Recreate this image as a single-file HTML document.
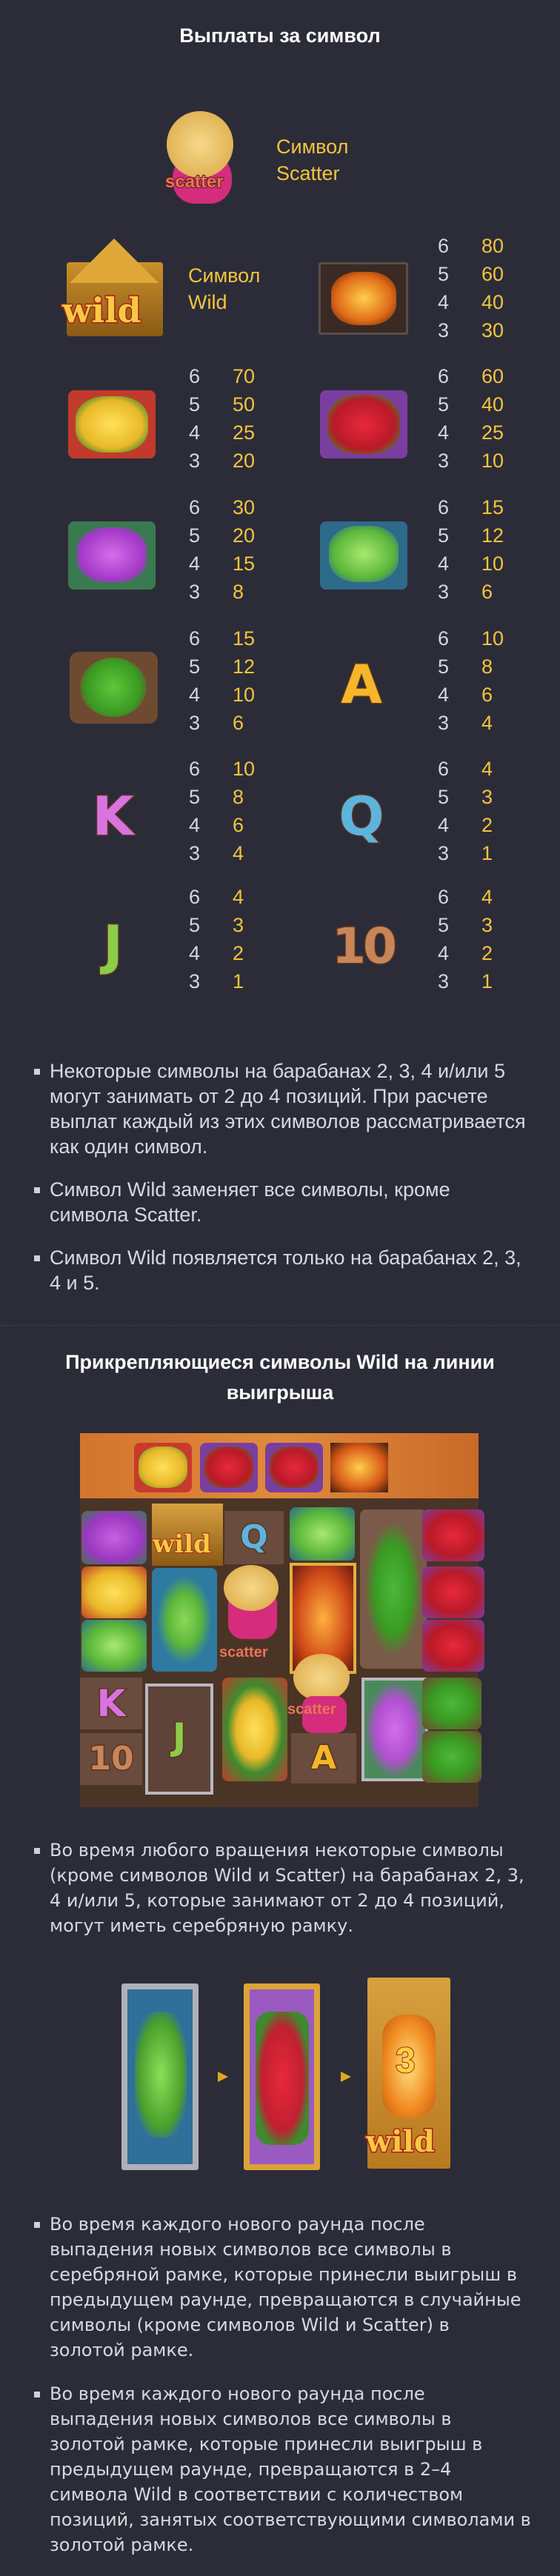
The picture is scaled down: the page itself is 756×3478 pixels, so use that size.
<!DOCTYPE html>
<html><head><meta charset="utf-8">
<style>
*{margin:0;padding:0;box-sizing:border-box}
body{width:756px;height:3462px;background:#2c2c39;position:relative;overflow:hidden;font-family:"Liberation Sans",sans-serif}
.a{position:absolute}
.h{color:#fff;font-weight:bold;font-size:27px;text-align:center;width:756px;left:0}
.nums{position:absolute;font-size:27px;line-height:38px;color:#d6d6dc}
.vals{position:absolute;font-size:27px;line-height:38px;color:#f3c53c}
.lbl{position:absolute;font-size:27px;line-height:36px;color:#f3c53c}
ul{list-style:none}
.t1 li{position:relative;padding-left:21px;color:#d8d8de;font-size:27px;line-height:34px;margin-bottom:24px}
.t1 li:before{content:"";position:absolute;left:0;top:14px;width:8px;height:8px;background:#d0d0d6}
.t2 li{position:relative;padding-left:21px;color:#d8d8de;font-family:"DejaVu Sans",sans-serif;font-size:24px;line-height:34px;margin-bottom:25px;white-space:nowrap}
.t2 li:before{content:"";position:absolute;left:0;top:14px;width:8px;height:8px;background:#d0d0d6}
.tile{position:absolute;border-radius:8px}
.letter{position:absolute;font-weight:bold;font-family:"DejaVu Sans",sans-serif;-webkit-text-stroke:3px #5a3320;paint-order:stroke fill;text-align:center}
</style></head><body>

<div class="a h" style="top:33px">Выплаты за символ</div>

<div class="a" style="left:215px;top:150px;width:118px;height:127px">
  <div class="a" style="left:18px;top:55px;width:80px;height:70px;background:#d62c7c;border-radius:35px 35px 30px 30px"></div>
  <div class="a" style="left:10px;top:0;width:90px;height:90px;border-radius:50%;background:radial-gradient(circle,#f6d98a,#d9a441);"></div>
  <div class="a" style="left:8px;top:82px;font-size:24px;font-weight:bold;color:#e8745a;-webkit-text-stroke:2px #5a1d12;paint-order:stroke fill">scatter</div>
</div>
<div class="lbl" style="left:373px;top:180px">Символ<br>Scatter</div>

<div class="a" style="left:82px;top:322px;width:144px;height:135px">
  <div class="a" style="left:8px;top:32px;width:130px;height:100px;background:linear-gradient(#c9902a,#8a5a14);border-radius:4px"></div>
  <div class="a" style="left:12px;top:0;width:0;height:0;border-left:60px solid transparent;border-right:60px solid transparent;border-bottom:60px solid #e0a838"></div>
  <div class="a" style="left:2px;top:70px;font-size:46px;font-weight:bold;color:#f8c843;-webkit-text-stroke:3px #a8241a;paint-order:stroke fill;font-family:'DejaVu Serif',serif">wild</div>
</div>
<div class="lbl" style="left:254px;top:354px">Символ<br>Wild</div>

<div class="tile" style="left:430px;top:354px;width:121px;height:98px;background:#3a2a24;border:3px solid #5a4e48;border-radius:3px">
  <div class="a" style="left:14px;top:10px;width:88px;height:72px;background:radial-gradient(ellipse,#ffcf4a,#e06a18 60%,#5a1a0a);border-radius:40%"></div>
</div>
<div class="nums" style="left:591px;top:313px">6<br>5<br>4<br>3</div>
<div class="vals" style="left:650px;top:313px">80<br>60<br>40<br>30</div>

<div class="tile" style="left:92px;top:527px;width:118px;height:92px;background:#c23a2c">
  <div class="a" style="left:10px;top:8px;width:98px;height:76px;background:radial-gradient(ellipse,#ffe15a,#e8b828 60%,#3f8a30 85%);border-radius:40%"></div>
</div>
<div class="nums" style="left:255px;top:489px">6<br>5<br>4<br>3</div>
<div class="vals" style="left:314px;top:489px">70<br>50<br>25<br>20</div>
<div class="tile" style="left:432px;top:527px;width:118px;height:92px;background:#7a3ea0">
  <div class="a" style="left:10px;top:6px;width:98px;height:80px;background:radial-gradient(ellipse,#e8283a,#b81a28 60%,#3f8a30 88%);border-radius:40%"></div>
</div>
<div class="nums" style="left:591px;top:489px">6<br>5<br>4<br>3</div>
<div class="vals" style="left:650px;top:489px">60<br>40<br>25<br>10</div>

<div class="tile" style="left:92px;top:704px;width:118px;height:92px;background:#3a7a50">
  <div class="a" style="left:12px;top:8px;width:94px;height:74px;background:radial-gradient(ellipse,#d46ee8,#a438c8 65%,#3a7a50 90%);border-radius:40%"></div>
</div>
<div class="nums" style="left:255px;top:666px">6<br>5<br>4<br>3</div>
<div class="vals" style="left:314px;top:666px">30<br>20<br>15<br>8</div>
<div class="tile" style="left:432px;top:704px;width:118px;height:92px;background:#2e6a8a">
  <div class="a" style="left:12px;top:6px;width:94px;height:76px;background:radial-gradient(ellipse,#a8e870,#5cb83a 60%,#2e6a8a 90%);border-radius:40%"></div>
</div>
<div class="nums" style="left:591px;top:666px">6<br>5<br>4<br>3</div>
<div class="vals" style="left:650px;top:666px">15<br>12<br>10<br>6</div>

<div class="tile" style="left:94px;top:880px;width:119px;height:97px;background:#6e4a30;border-radius:12px">
  <div class="a" style="left:14px;top:8px;width:90px;height:80px;background:radial-gradient(circle,#5cc83a,#3a9a22 60%,#6e4a30 85%);border-radius:50%"></div>
</div>
<div class="nums" style="left:255px;top:843px">6<br>5<br>4<br>3</div>
<div class="vals" style="left:314px;top:843px">15<br>12<br>10<br>6</div>
<div class="letter" style="left:448px;top:884px;width:80px;font-size:72px;line-height:80px;color:#f5b62a">A</div>
<div class="nums" style="left:591px;top:843px">6<br>5<br>4<br>3</div>
<div class="vals" style="left:650px;top:843px">10<br>8<br>6<br>4</div>

<div class="letter" style="left:115px;top:1062px;width:75px;font-size:72px;line-height:80px;color:#d873e0">K</div>
<div class="nums" style="left:255px;top:1019px">6<br>5<br>4<br>3</div>
<div class="vals" style="left:314px;top:1019px">10<br>8<br>6<br>4</div>
<div class="letter" style="left:448px;top:1062px;width:80px;font-size:72px;line-height:80px;color:#5cb4dc">Q</div>
<div class="nums" style="left:591px;top:1019px">6<br>5<br>4<br>3</div>
<div class="vals" style="left:650px;top:1019px">4<br>3<br>2<br>1</div>

<div class="letter" style="left:115px;top:1236px;width:75px;font-size:72px;line-height:80px;color:#8ccc4a">J</div>
<div class="nums" style="left:255px;top:1192px">6<br>5<br>4<br>3</div>
<div class="vals" style="left:314px;top:1192px">4<br>3<br>2<br>1</div>
<div class="letter" style="left:440px;top:1238px;width:100px;font-size:66px;line-height:80px;color:#c8855a;letter-spacing:-4px">10</div>
<div class="nums" style="left:591px;top:1192px">6<br>5<br>4<br>3</div>
<div class="vals" style="left:650px;top:1192px">4<br>3<br>2<br>1</div>

<ul class="t1 a" style="left:46px;top:1429px;width:672px">
<li>Некоторые символы на барабанах 2, 3, 4 и/или 5 могут занимать от 2 до 4 позиций. При расчете выплат каждый из этих символов рассматривается как один символ.</li>
<li>Символ Wild заменяет все символы, кроме символа Scatter.</li>
<li>Символ Wild появляется только на барабанах 2, 3, 4 и 5.</li>
</ul>
<div class="a" style="left:0;top:1789px;width:756px;border-top:1px dotted #45455a"></div>

<div class="a h" style="top:1819px;line-height:41px">Прикрепляющиеся символы Wild на линии<br>выигрыша</div>

<div class="a" style="left:108px;top:1935px;width:538px;height:505px;background:#4a3426">
  <div class="a" style="left:0;top:0;width:538px;height:88px;background:linear-gradient(90deg,#d2752e,#e08a3c,#c86a28)"></div>
  <div class="tile" style="left:73px;top:13px;width:78px;height:67px;background:#c83a2c"><div class="a" style="left:6px;top:5px;width:66px;height:56px;border-radius:40%;background:radial-gradient(#ffe15a,#e8b828 60%,#3f8a30)"></div></div>
  <div class="tile" style="left:162px;top:13px;width:78px;height:67px;background:#7a3ea0"><div class="a" style="left:6px;top:5px;width:66px;height:56px;border-radius:40%;background:radial-gradient(#e8283a,#b81a28 60%,#3f8a30)"></div></div>
  <div class="tile" style="left:250px;top:13px;width:78px;height:67px;background:#7a3ea0"><div class="a" style="left:6px;top:5px;width:66px;height:56px;border-radius:40%;background:radial-gradient(#e8283a,#b81a28 60%,#3f8a30)"></div></div>
  <div class="a" style="left:338px;top:13px;width:78px;height:67px;background:radial-gradient(#ffcf4a,#d85a18 60%,#3a1a10)"></div>
  <div class="tile" style="left:2px;top:105px;width:88px;height:72px;background:radial-gradient(#c860e0,#9a38c0 60%,#3a7a50)"></div>
  <div class="tile" style="left:2px;top:180px;width:88px;height:70px;background:radial-gradient(#ffe15a,#e8b828 55%,#c23a2c)"></div>
  <div class="tile" style="left:2px;top:252px;width:88px;height:70px;background:radial-gradient(#a8e870,#5cb83a 55%,#2e6a8a)"></div>
  <div class="a" style="left:0;top:330px;width:84px;height:70px;background:#6a4c3e"></div>
  <div class="letter" style="left:0;top:330px;width:84px;font-size:50px;line-height:70px;color:#d873e0">K</div>
  <div class="a" style="left:0;top:405px;width:84px;height:70px;background:#6a4c3e"></div>
  <div class="letter" style="left:0;top:405px;width:84px;font-size:44px;line-height:70px;color:#c8855a">10</div>
  <div class="a" style="left:97px;top:95px;width:96px;height:84px;background:linear-gradient(#d8a040,#8a5a14)"></div>
  <div class="a" style="left:98px;top:130px;font-size:34px;font-weight:bold;color:#f8c843;-webkit-text-stroke:2px #a8241a;paint-order:stroke fill;font-family:'DejaVu Serif',serif">wild</div>
  <div class="tile" style="left:97px;top:182px;width:88px;height:140px;background:radial-gradient(#8cd85a,#5cb83a 35%,#2e7aa0 60%)"></div>
  <div class="a" style="left:88px;top:338px;width:92px;height:150px;background:#5e4438;border:4px solid #b8b8c0"></div>
  <div class="letter" style="left:88px;top:370px;width:92px;font-size:50px;line-height:80px;color:#8ccc4a">J</div>
  <div class="a" style="left:195px;top:105px;width:80px;height:72px;background:#6a4c3e"></div>
  <div class="letter" style="left:195px;top:105px;width:80px;font-size:44px;line-height:72px;color:#5cb4dc">Q</div>
  <div class="a" style="left:200px;top:210px;width:66px;height:68px;background:#d62c7c;border-radius:20px"></div>
  <div class="a" style="left:194px;top:178px;width:74px;height:62px;border-radius:50%;background:radial-gradient(#f6d98a,#d9a441)"></div>
  <div class="a" style="left:188px;top:285px;font-size:20px;font-weight:bold;color:#e8745a">scatter</div>
  <div class="tile" style="left:192px;top:330px;width:88px;height:140px;background:radial-gradient(#ffe15a,#e8b828 40%,#3f8a30 60%,#c23a2c)"></div>
  <div class="tile" style="left:283px;top:100px;width:88px;height:72px;background:radial-gradient(#a8e870,#5cb83a 55%,#2e6a8a)"></div>
  <div class="a" style="left:283px;top:175px;width:90px;height:150px;background:radial-gradient(#ffb040,#d04a18 60%,#6a1a10);border:4px solid #e0b040"></div>
  <div class="a" style="left:288px;top:298px;width:76px;height:64px;border-radius:50%;background:radial-gradient(#f6d98a,#d9a441)"></div>
  <div class="a" style="left:300px;top:355px;width:60px;height:50px;background:#d62c7c;border-radius:14px"></div>
  <div class="a" style="left:280px;top:362px;font-size:20px;font-weight:bold;color:#e8745a">scatter</div>
  <div class="a" style="left:285px;top:405px;width:88px;height:68px;background:#6a4c3e"></div>
  <div class="letter" style="left:285px;top:405px;width:88px;font-size:44px;line-height:68px;color:#f5b62a">A</div>
  <div class="tile" style="left:378px;top:103px;width:90px;height:215px;background:radial-gradient(ellipse,#4cb83a,#3a9a22 40%,#7a5a48 60%)"></div>
  <div class="a" style="left:380px;top:330px;width:90px;height:140px;background:radial-gradient(#d46ee8,#b050d0 45%,#4a8a5a 70%);border:4px solid #b8b8c0"></div>
  <div class="tile" style="left:462px;top:103px;width:84px;height:70px;background:radial-gradient(#e8283a,#b81a28 55%,#7a3ea0)"></div>
  <div class="tile" style="left:462px;top:180px;width:84px;height:70px;background:radial-gradient(#e8283a,#b81a28 55%,#7a3ea0)"></div>
  <div class="tile" style="left:462px;top:252px;width:84px;height:70px;background:radial-gradient(#e8283a,#b81a28 55%,#7a3ea0)"></div>
  <div class="tile" style="left:462px;top:330px;width:80px;height:70px;background:radial-gradient(#4cb83a,#3a9a22 50%,#6e4a30)"></div>
  <div class="tile" style="left:462px;top:402px;width:80px;height:70px;background:radial-gradient(#4cb83a,#3a9a22 50%,#6e4a30)"></div>
</div>

<ul class="t2 a" style="left:46px;top:2481px;width:700px">
<li>Во время любого вращения некоторые символы<br>(кроме символов Wild и Scatter) на барабанах 2, 3,<br>4 и/или 5, которые занимают от 2 до 4 позиций,<br>могут иметь серебряную рамку.</li>
</ul>

<div class="a" style="left:164px;top:2678px;width:104px;height:252px;background:#2f6f9a;border:8px solid #b0b0b8;border-radius:3px">
  <div class="a" style="left:10px;top:30px;width:70px;height:170px;border-radius:30px;background:radial-gradient(ellipse,#8ce05a,#4aa02a 60%,#2f6f9a 80%)"></div>
</div>
<div class="a" style="left:294px;top:2797px;width:0;height:0;border-top:7px solid transparent;border-bottom:7px solid transparent;border-left:14px solid #e0a820"></div>
<div class="a" style="left:329px;top:2678px;width:103px;height:252px;background:#9a5ac0;border:8px solid #dca436;border-radius:3px">
  <div class="a" style="left:8px;top:30px;width:72px;height:180px;border-radius:20px;background:radial-gradient(ellipse,#e8283a,#c02030 55%,#3f8a30 75%)"></div>
</div>
<div class="a" style="left:460px;top:2797px;width:0;height:0;border-top:7px solid transparent;border-bottom:7px solid transparent;border-left:14px solid #e0a820"></div>
<div class="a" style="left:496px;top:2670px;width:112px;height:258px;background:linear-gradient(#d8a040,#b87a20);border-radius:3px">
  <div class="a" style="left:20px;top:50px;width:72px;height:140px;border-radius:30px;background:radial-gradient(ellipse,#ffe080,#f08a20 60%,#c05a10)"></div>
  <div class="a" style="left:38px;top:85px;font-size:48px;font-weight:bold;color:#ffd040;-webkit-text-stroke:2px #a03010;paint-order:stroke fill">3</div>
  <div class="a" style="left:-2px;top:198px;font-size:40px;font-weight:bold;color:#f8c843;-webkit-text-stroke:3px #a8241a;paint-order:stroke fill;font-family:'DejaVu Serif',serif">wild</div>
</div>

<ul class="t2 a" style="left:46px;top:2986px;width:700px">
<li>Во время каждого нового раунда после<br>выпадения новых символов все символы в<br>серебряной рамке, которые принесли выигрыш в<br>предыдущем раунде, превращаются в случайные<br>символы (кроме символов Wild и Scatter) в<br>золотой рамке.</li>
<li>Во время каждого нового раунда после<br>выпадения новых символов все символы в<br>золотой рамке, которые принесли выигрыш в<br>предыдущем раунде, превращаются в 2–4<br>символа Wild в соответствии с количеством<br>позиций, занятых соответствующими символами в<br>золотой рамке.</li>
</ul>
</body></html>
